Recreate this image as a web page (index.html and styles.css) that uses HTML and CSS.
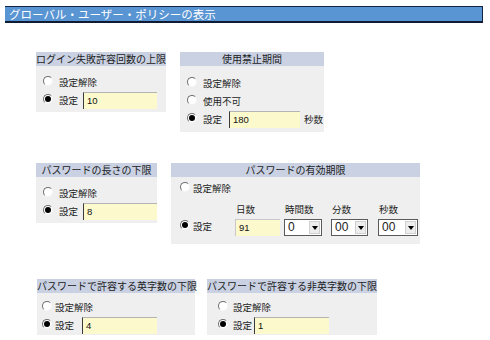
FILE: index.html
```html
<!DOCTYPE html>
<html lang="ja">
<head>
<meta charset="utf-8">
<title>グローバル・ユーザー・ポリシーの表示</title>
<link rel="stylesheet" href="styles.css">
</head>
<body>
<div class="title">グローバル・ユーザー・ポリシーの表示</div>

<div class="row r1">
  <div class="box b1">
    <div class="hd">ログイン失敗許容回数の上限</div>
    <div class="bd">
      <div class="opt"><span class="radio"></span><span class="lbl">設定解除</span></div>
      <div class="opt"><span class="radio on"></span><span class="lbl">設定</span><span class="inp w74">10</span></div>
    </div>
  </div>
  <div class="box b2">
    <div class="hd">使用禁止期間</div>
    <div class="bd">
      <div class="opt"><span class="radio"></span><span class="lbl">設定解除</span></div>
      <div class="opt"><span class="radio"></span><span class="lbl">使用不可</span></div>
      <div class="opt"><span class="radio on"></span><span class="lbl">設定</span><span class="inp w71">180</span><span class="unit">秒数</span></div>
    </div>
  </div>
</div>

<div class="row r2">
  <div class="box b3">
    <div class="hd">パスワードの長さの下限</div>
    <div class="bd">
      <div class="opt"><span class="radio"></span><span class="lbl">設定解除</span></div>
      <div class="opt"><span class="radio on"></span><span class="lbl">設定</span><span class="inp w74">8</span></div>
    </div>
  </div>
  <div class="box b4">
    <div class="hd">パスワードの有効期限</div>
    <div class="bd">
      <div class="opt"><span class="radio"></span><span class="lbl">設定解除</span></div>
      <div class="setrow">
        <div class="setleft"><span class="radio on"></span><span class="lbl">設定</span></div>
        <div class="cols">
          <div class="col c1"><div class="clab">日数</div><div class="inp w45">91</div></div>
          <div class="col c2"><div class="clab">時間数</div><div class="sel s38"><span class="sv">0</span><span class="btn"></span></div></div>
          <div class="col c3"><div class="clab">分数</div><div class="sel s37"><span class="sv">00</span><span class="btn"></span></div></div>
          <div class="col c4"><div class="clab">秒数</div><div class="sel s40"><span class="sv">00</span><span class="btn"></span></div></div>
        </div>
      </div>
    </div>
  </div>
</div>

<div class="row r3">
  <div class="box b5">
    <div class="hd">パスワードで許容する英字数の下限</div>
    <div class="bd">
      <div class="opt"><span class="radio"></span><span class="lbl">設定解除</span></div>
      <div class="opt"><span class="radio on"></span><span class="lbl">設定</span><span class="inp w75">4</span></div>
    </div>
  </div>
  <div class="box b6">
    <div class="hd">パスワードで許容する非英字数の下限</div>
    <div class="bd">
      <div class="opt"><span class="radio"></span><span class="lbl">設定解除</span></div>
      <div class="opt"><span class="radio on"></span><span class="lbl">設定</span><span class="inp w75">1</span></div>
    </div>
  </div>
</div>
</body>
</html>
```

FILE: styles.css
```css
html, body {
  margin: 0;
  padding: 0;
  background: #ffffff;
}
body {
  width: 490px;
  height: 340px;
  overflow: hidden;
  font-family: "Noto Sans CJK JP", "Liberation Sans", sans-serif;
  color: #1c1c1c;
  font-size: 9px;
}
.title {
  margin: 6px 0 0 5px;
  width: 473px;
  height: 14px;
  line-height: 14px;
  padding-left: 4px;
  background: #5a95d3;
  border-top: 1px solid #14233f;
  border-bottom: 2px solid #0e1b33;
  border-right: 1px solid #14233f;
  color: #ffffff;
  font-size: 11.5px;
  white-space: nowrap;
}
.row {
  display: flex;
  align-items: flex-start;
  padding-left: 36px;
}
.r1 { margin-top: 29px; gap: 14px; }
.r2 { margin-top: 31px; gap: 14px; }
.r3 { margin-top: 35px; gap: 12px; padding-left: 37px; }

.box { display: flex; flex-direction: column; }
.b1 { width: 130px; }
.b2 { width: 144px; }
.b3 { width: 121px; }
.b4 { width: 249px; }
.b5 { width: 158px; }
.b6 { width: 170px; }

.hd {
  height: 14px;
  line-height: 14px;
  background: #c9d1e3;
  text-align: center;
  white-space: nowrap;
  font-size: 10px;
  color: #222;
  overflow: visible;
}
.bd {
  background: #efefef;
  padding: 7px 0 3px 7px;
}
.b2 .bd { padding: 8px 0 4px 7px; }
.b4 .bd { padding: 2px 0 8px 9px; }
.b5 .bd { padding: 5px 0 1px 5px; }
.b6 .bd { padding: 5px 0 1px 11px; }

.opt {
  display: flex;
  align-items: center;
  height: 18px;
  white-space: nowrap;
}
.radio {
  position: relative;
  flex: none;
  width: 8px;
  height: 8px;
  border-radius: 50%;
  background: #ffffff;
  border: 1px solid;
  border-color: #6e6e6e #f4f4f4 #f4f4f4 #6e6e6e;
  margin-right: 6px;
  margin-top: -3px;
}
.b4 .radio { margin-right: 3px; }
.b5 .radio { margin-right: 3px; }
.b6 .radio { margin-right: 5px; }
.radio.on::after {
  content: "";
  position: absolute;
  left: 1px;
  top: 1px;
  width: 6px;
  height: 6px;
  border-radius: 50%;
  background: #000;
}
.lbl {
  font-size: 9.5px;
  line-height: 18px;
}
.opt .lbl + .inp { margin-left: 5px; }
.b2 .opt .lbl + .inp { margin-left: 7px; }
.b6 .opt .lbl + .inp { margin-left: 2px; }
.b5 .opt .lbl + .inp { margin-left: 8px; }

.inp {
  flex: none;
  box-sizing: border-box;
  height: 17px;
  line-height: 16px;
  background: #fcf9cd;
  border-top: 1px solid #b4b4b4;
  border-left: 1px solid #3a3a3a;
  padding-left: 3px;
  font-family: "Liberation Sans", sans-serif;
  font-size: 9.5px;
  color: #111;
}
.w74 { width: 74px; }
.w71 { width: 71px; }
.w75 { width: 75px; }
.w45 { width: 45px; border-left-color: #c8c8c8; border-top-color: #c8c8c8; }
.unit { margin-left: 4px; font-size: 9.5px; }

.setrow {
  display: flex;
  margin-top: 2px;
}
.setleft {
  display: flex;
  align-items: center;
  width: 55px;
  height: 18px;
  margin-top: 18px;
}
.cols { display: flex; }
.col { display: flex; flex-direction: column; }
.c2 { margin-left: 4px; }
.c3 { margin-left: 9px; }
.c4 { margin-left: 10px; }
.clab {
  height: 20px;
  line-height: 20px;
  font-size: 9.5px;
  padding-left: 1px;
}
.sel {
  box-sizing: border-box;
  display: flex;
  align-items: center;
  justify-content: space-between;
  height: 17px;
  background: #ffffff;
  border: 1px solid #5a5a5a;
  padding: 0 1px 0 3px;
}
.s38 { width: 38px; }
.s37 { width: 37px; }
.s40 { width: 40px; }
.sv {
  font-family: "Liberation Sans", sans-serif;
  font-size: 12px;
  line-height: 15px;
  color: #222;
}
.btn {
  position: relative;
  width: 11px;
  height: 13px;
  box-sizing: border-box;
  background: #ededed;
  border: 1px solid #d0d0d0;
}
.btn::after {
  content: "";
  position: absolute;
  left: 2px;
  top: 4px;
  border-left: 3px solid transparent;
  border-right: 3px solid transparent;
  border-top: 4px solid #000;
}
```
